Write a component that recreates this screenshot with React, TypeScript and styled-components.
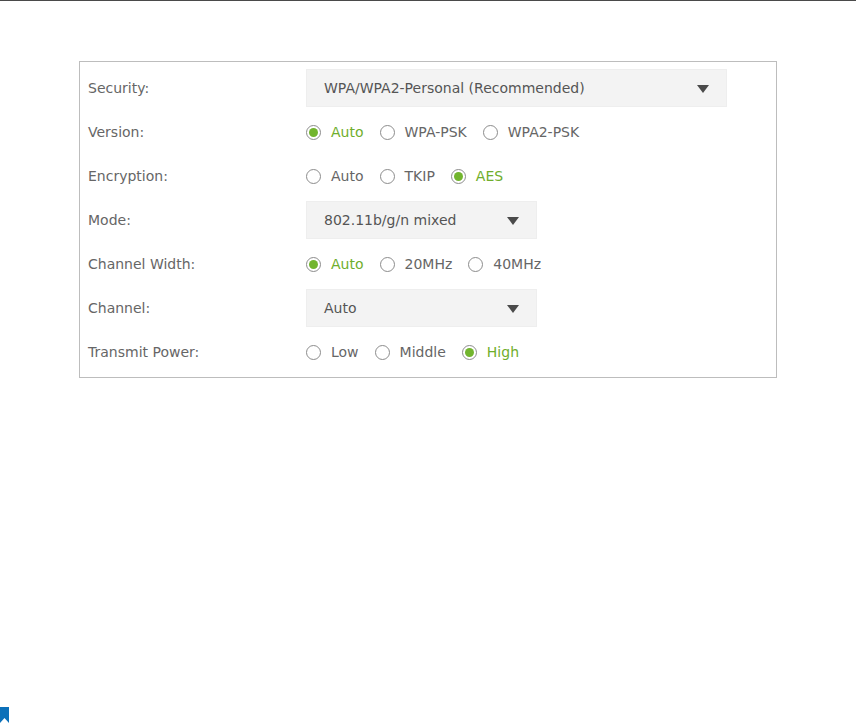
import styled, { createGlobalStyle } from "styled-components";

const GlobalStyle = createGlobalStyle`
  html, body {
    margin: 0;
    padding: 0;
    background: #fff;
  }
  body {
    font-family: "DejaVu Sans", Verdana, sans-serif;
    font-size: 14px;
    color: #666;
  }
`;

const Page = styled.div`
  position: relative;
  width: 856px;
  height: 723px;
  overflow: hidden;
  border-top: 1px solid #4a4a4a;
  box-sizing: border-box;
  padding: 60px 0 0 79px;
`;

const Panel = styled.div`
  width: 698px;
  height: 317px;
  box-sizing: border-box;
  border: 1px solid #bdbdbd;
  padding: 4px 8px 0;
  display: flex;
  flex-direction: column;
`;

const Row = styled.div`
  display: grid;
  grid-template-columns: 218px 1fr;
  align-items: center;
  height: 44px;
`;

const Label = styled.div`
  color: #666;
`;

const Select = styled.div<{ $width: number }>`
  width: ${(p) => p.$width}px;
  height: 38px;
  box-sizing: border-box;
  background: #f3f3f3;
  border: 1px solid #eeeeee;
  padding: 0 17px;
  display: flex;
  align-items: center;
  justify-content: space-between;
  color: #555;
`;

const Caret = styled.span`
  width: 0;
  height: 0;
  border-left: 6.5px solid transparent;
  border-right: 6.5px solid transparent;
  border-top: 8px solid #4a4a4a;
  margin-top: 2px;
`;

const Options = styled.div`
  display: flex;
  align-items: center;
  gap: 16px;
`;

const Option = styled.div<{ $on?: boolean }>`
  display: flex;
  align-items: center;
  gap: 10px;
  color: ${(p) => (p.$on ? "#6fae2c" : "#666")};
`;

const Dot = styled.span<{ $on?: boolean }>`
  width: 15px;
  height: 15px;
  box-sizing: border-box;
  border-radius: 50%;
  border: 1px solid #8c8c8c;
  background: #fff;
  display: flex;
  align-items: center;
  justify-content: center;
  &::after {
    content: "";
    width: 9px;
    height: 9px;
    border-radius: 50%;
    background: ${(p) => (p.$on ? "#72b52e" : "transparent")};
  }
`;

const Bookmark = styled.svg`
  position: absolute;
  left: 0;
  bottom: 0;
  display: block;
`;

type Item = { label: string; on?: boolean };

function Radios({ items }: { items: Item[] }) {
  return (
    <Options>
      {items.map((it) => (
        <Option key={it.label} $on={it.on}>
          <Dot $on={it.on} />
          {it.label}
        </Option>
      ))}
    </Options>
  );
}

function Dropdown({ value, width }: { value: string; width: number }) {
  return (
    <Select $width={width}>
      {value}
      <Caret />
    </Select>
  );
}

export default function App() {
  return (
    <>
      <GlobalStyle />
      <Page>
        <Panel>
          <Row>
            <Label>Security:</Label>
            <Dropdown value="WPA/WPA2-Personal (Recommended)" width={421} />
          </Row>
          <Row>
            <Label>Version:</Label>
            <Radios items={[{ label: "Auto", on: true }, { label: "WPA-PSK" }, { label: "WPA2-PSK" }]} />
          </Row>
          <Row>
            <Label>Encryption:</Label>
            <Radios items={[{ label: "Auto" }, { label: "TKIP" }, { label: "AES", on: true }]} />
          </Row>
          <Row>
            <Label>Mode:</Label>
            <Dropdown value="802.11b/g/n mixed" width={231} />
          </Row>
          <Row>
            <Label>Channel Width:</Label>
            <Radios items={[{ label: "Auto", on: true }, { label: "20MHz" }, { label: "40MHz" }]} />
          </Row>
          <Row>
            <Label>Channel:</Label>
            <Dropdown value="Auto" width={231} />
          </Row>
          <Row>
            <Label>Transmit Power:</Label>
            <Radios items={[{ label: "Low" }, { label: "Middle" }, { label: "High", on: true }]} />
          </Row>
        </Panel>
        <Bookmark width="9" height="16" viewBox="0 0 9 16">
          <path d="M0 0H9V16L4.5 11L0 16Z" fill="#0b70b9" />
        </Bookmark>
      </Page>
    </>
  );
}
